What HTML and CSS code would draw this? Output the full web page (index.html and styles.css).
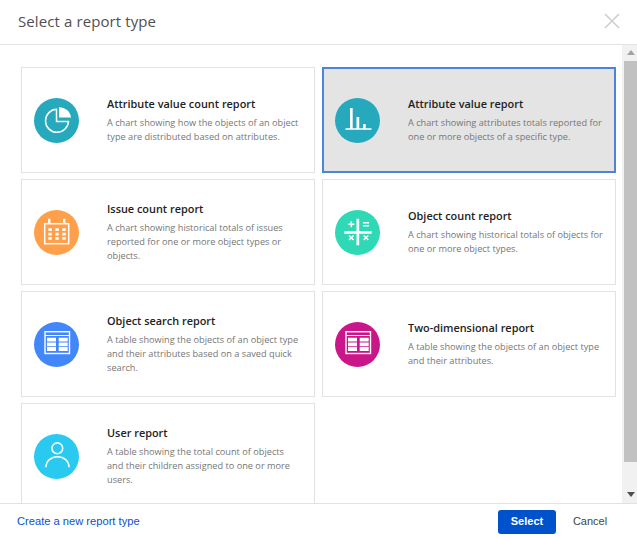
FILE: index.html
```html
<!DOCTYPE html>
<html lang="en">
<head>
<meta charset="utf-8">
<title>Select a report type</title>
<link rel="stylesheet" href="styles.css">
</head>
<body>
<div class="dialog">
  <header class="head">
    <h1 class="title">Select a report type</h1>
    <button class="close" aria-label="Close">
      <svg width="16" height="16" viewBox="0 0 16 16"><path d="M1 1L15 15M15 1L1 15" stroke="#cfcfcf" stroke-width="1.6" fill="none"/></svg>
    </button>
  </header>
  <div class="middle">
    <main class="scroll">
      <div class="grid">
        <article class="card">
          <span class="icon teal">
            <svg viewBox="0 0 45 45"><path d="M22.5 11.3A11.5 11.5 0 1 0 34.5 23.5H22.5Z" fill="none" stroke="#fff" stroke-width="1.5"/><path d="M25 9.2A11.5 11.5 0 0 1 37 19.5H25Z" fill="#fff"/></svg>
          </span>
          <div class="text"><h2>Attribute value count report</h2><p>A chart showing how the objects of an object type are distributed based on attributes.</p></div>
        </article>
        <article class="card selected">
          <span class="icon teal">
            <svg viewBox="0 0 45 45"><path d="M10.5 30.3H36.5V31.8H10.5ZM15 10H17.7V30.5H15ZM21.5 19H24.2V30.5H21.5ZM28 26H30.7V30.5H28Z" fill="#fff"/></svg>
          </span>
          <div class="text"><h2>Attribute value report</h2><p>A chart showing attributes totals reported for one or more objects of a specific type.</p></div>
        </article>
        <article class="card">
          <span class="icon orange">
            <svg viewBox="0 0 45 45"><rect x="10.7" y="13.7" width="24" height="20" fill="none" stroke="#fff" stroke-width="1.5"/><path d="M14 8.7H16.4V14H14ZM29 8.7H31.4V14H29Z" fill="#fff"/><path d="M14.3 18.3h3.4v2.7h-3.4zM21.3 18.3h3.4v2.7h-3.4zM28.3 18.3h3.4v2.7h-3.4zM14.3 22.7h3.4v2.7h-3.4zM21.3 22.7h3.4v2.7h-3.4zM28.3 22.7h3.4v2.7h-3.4zM14.3 27h3.4v2.7h-3.4zM21.3 27h3.4v2.7h-3.4zM28.3 27h3.4v2.7h-3.4z" fill="#fff"/></svg>
          </span>
          <div class="text"><h2>Issue count report</h2><p>A chart showing historical totals of issues reported for one or more object types or objects.</p></div>
        </article>
        <article class="card">
          <span class="icon green">
            <svg viewBox="0 0 45 45"><path d="M21.5 8.7H24.2V35.3H21.5ZM9.3 21H36.7V23.7H9.3Z" fill="#fff"/><path d="M16.3 11.3V17.3M13.3 14.3H19.3M28 12.8H34M28 15.8H34M14 25.5L18.6 30M18.6 25.5L14 30M28.7 25.5L33.3 30M33.3 25.5L28.7 30" stroke="#fff" stroke-width="1.6" fill="none"/></svg>
          </span>
          <div class="text"><h2>Object count report</h2><p>A chart showing historical totals of objects for one or more object types.</p></div>
        </article>
        <article class="card">
          <span class="icon blue">
            <svg viewBox="0 0 45 45"><rect x="11" y="9.7" width="24.5" height="21.8" fill="none" stroke="#fff" stroke-width="1.4"/><path d="M11 13H35.5V14H11ZM13 15.7h9v3.9h-9zM24.7 15.7h9v3.9h-9zM13 20.4h9v3.9h-9zM24.7 20.4h9v3.9h-9zM13 25.1h9v3.9h-9zM24.7 25.1h9v3.9h-9z" fill="#fff"/></svg>
          </span>
          <div class="text"><h2>Object search report</h2><p>A table showing the objects of an object type and their attributes based on a saved quick search.</p></div>
        </article>
        <article class="card">
          <span class="icon magenta">
            <svg viewBox="0 0 45 45"><rect x="11" y="9.7" width="24.5" height="21.8" fill="none" stroke="#fff" stroke-width="1.4"/><path d="M11 13H35.5V14H11ZM13 15.7h9v3.9h-9zM24.7 15.7h9v3.9h-9zM13 20.4h9v3.9h-9zM24.7 20.4h9v3.9h-9zM13 25.1h9v3.9h-9zM24.7 25.1h9v3.9h-9z" fill="#fff"/></svg>
          </span>
          <div class="text"><h2>Two-dimensional report</h2><p>A table showing the objects of an object type and their attributes.</p></div>
        </article>
        <article class="card">
          <span class="icon cyan">
            <svg viewBox="0 0 45 45"><circle cx="23.3" cy="14.3" r="5.4" fill="none" stroke="#fff" stroke-width="1.6"/><path d="M12 33.3C12 27 17 22.8 23.5 22.8S35 27 35 33.3" fill="none" stroke="#fff" stroke-width="1.6"/></svg>
          </span>
          <div class="text"><h2>User report</h2><p>A table showing the total count of objects and their children assigned to one or more users.</p></div>
        </article>
      </div>
    </main>
    <div class="scrollbar">
      <span class="arrow up"></span>
      <span class="thumb"></span>
      <span class="arrow down"></span>
    </div>
  </div>
  <footer class="foot">
    <a class="create" href="#">Create a new report type</a>
    <div class="actions">
      <button class="primary">Select</button>
      <button class="ghost">Cancel</button>
    </div>
  </footer>
</div>
</body>
</html>
```
FILE: styles.css
```css
* { box-sizing: border-box; }
html, body { margin: 0; height: 100%; overflow: hidden; background: #fff; }
.dialog {
  width: 637px;
  height: 539px;
  display: flex;
  flex-direction: column;
  font-family: "Open Sans", "Noto Sans", sans-serif;
}
.head {
  height: 45px;
  flex: none;
  display: flex;
  align-items: center;
  justify-content: space-between;
  padding: 0 17px 2px 18px;
  border-bottom: 1px solid #e2e2e2;
}
.title { margin: 0; font-size: 15px; font-weight: 400; color: #505050; letter-spacing: 0.1px; }
.close { border: 0; background: none; padding: 0; display: flex; }
.middle { flex: 1; min-height: 0; display: flex; }
.scroll { flex: 1; min-width: 0; overflow: hidden; padding: 22px 0 0 21px; }
.grid {
  display: grid;
  grid-template-columns: 294px 294px;
  grid-auto-rows: 106px;
  column-gap: 7px;
  row-gap: 6px;
}
.card {
  display: flex;
  align-items: center;
  padding: 0 12px;
  border: 1px solid #e2e2e2;
  background: #fff;
}
.card.selected { background: #e4e4e4; border: 2px solid #4c84da; padding: 0 11px; }
.icon { width: 45px; height: 45px; flex: none; border-radius: 50%; margin-right: 28px; display: block; }
.icon svg { display: block; width: 45px; height: 45px; }
.teal { background: #26a9bc; }
.orange { background: #ff9f4a; }
.green { background: #2fd9b6; }
.blue { background: #4287f9; }
.magenta { background: #c9178a; }
.cyan { background: #2ac9ef; }
.text { min-width: 0; }
.text h2 { margin: 0 0 4px; font-size: 10.9px; line-height: 16px; font-weight: 600; color: #222; }
.text p { margin: 0; font-size: 9.2px; line-height: 14px; color: #767676; }
.scrollbar {
  width: 15px;
  flex: none;
  background: #f1f1f1;
  display: flex;
  flex-direction: column;
  align-items: center;
  padding: 5px 0 0 2px;
}
.arrow { width: 0; height: 0; border-left: 4px solid transparent; border-right: 4px solid transparent; flex: none; }
.arrow.up { border-bottom: 5px solid #a3a3a3; }
.arrow.down { border-top: 5px solid #505050; margin-top: 30px; }
.thumb { width: 100%; height: 401px; background: #c1c1c1; margin-top: 6px; flex: none; }
.foot {
  height: 36px;
  flex: none;
  display: flex;
  align-items: center;
  justify-content: space-between;
  padding: 0 24px 0 17px;
  border-top: 1px solid #e2e2e2;
  font-family: "Liberation Sans", Arial, sans-serif;
}
.create { font-size: 11.15px; color: #0b52c9; text-decoration: none; margin-bottom: 2px; }
.actions { display: flex; align-items: center; gap: 11px; }
.primary {
  width: 58px; height: 24px; border: 0; border-radius: 3px;
  background: #0052cc; color: #fff; font: 700 11px "Liberation Sans", Arial, sans-serif; padding: 0 0 2px;
}
.ghost {
  width: 46px; height: 24px; border: 0; background: none; padding: 0 0 2px;
  color: #444; font: 400 11px "Liberation Sans", Arial, sans-serif;
}
```
